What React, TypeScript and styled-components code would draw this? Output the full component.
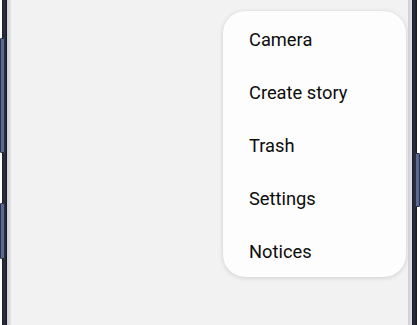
import React from "react";
import styled, { createGlobalStyle } from "styled-components";

const items = ["Camera", "Create story", "Trash", "Settings", "Notices"];

function App() {
  return (
    <>
      <GlobalStyle />
      <Phone>
        <Edge $side="left">
          <Key $top={38} $height={113} $side="left" />
          <Key $top={203} $height={54} $side="left" />
        </Edge>
        <Rim />
        <Screen>
          <Menu>
            {items.map((label) => (
              <MenuItem key={label}>{label}</MenuItem>
            ))}
          </Menu>
        </Screen>
        <Rim />
        <Edge $side="right">
          <Key $top={153} $height={52} $side="right" />
        </Edge>
      </Phone>
    </>
  );
}

export default App;

const GlobalStyle = createGlobalStyle`
  html, body {
    margin: 0;
    padding: 0;
    background: #ffffff;
  }
  body {
    font-family: Roboto, "Noto Sans", "Liberation Sans", sans-serif;
  }
`;

const Phone = styled.div`
  width: 420px;
  height: 325px;
  display: flex;
  overflow: hidden;
  background: #ffffff;
`;

const Edge = styled.div<{ $side: "left" | "right" }>`
  position: relative;
  width: 5px;
  flex-shrink: 0;
  margin: ${(p) => (p.$side === "left" ? "0 0 0 2px" : "0 3px 0 0")};
  background: linear-gradient(
    to right,
    #1a1d26,
    #2a3142 45%,
    #141821
  );
`;

const Key = styled.div<{ $top: number; $height: number; $side: "left" | "right" }>`
  position: absolute;
  top: ${(p) => p.$top}px;
  height: ${(p) => p.$height}px;
  width: 3px;
  ${(p) => (p.$side === "left" ? "left: -2px;" : "right: -3px;")}
  background: #5a6a90;
  border: 1px solid #2a3144;
  border-radius: 1px;
`;

const Rim = styled.div`
  width: 4px;
  flex-shrink: 0;
  background: linear-gradient(to right, #cfd0d4, #e3e3e6);
`;

const Screen = styled.div`
  flex: 1;
  background: #f2f2f2;
  display: flex;
  justify-content: flex-end;
  align-items: flex-start;
  padding: 11px 2px 0 0;
`;

const Menu = styled.div`
  width: 183px;
  height: 266px;
  box-sizing: border-box;
  padding-top: 2px;
  background: #fdfdfd;
  border-radius: 22px;
  box-shadow: 0 1px 5px rgba(0, 0, 0, 0.14), 0 0 1px rgba(0, 0, 0, 0.08);
  display: flex;
  flex-direction: column;
  overflow: hidden;
`;

const MenuItem = styled.div`
  height: 53px;
  line-height: 53px;
  flex-shrink: 0;
  padding-left: 26px;
  font-size: 18.3px;
  color: #0c0c0c;
  white-space: nowrap;
`;
